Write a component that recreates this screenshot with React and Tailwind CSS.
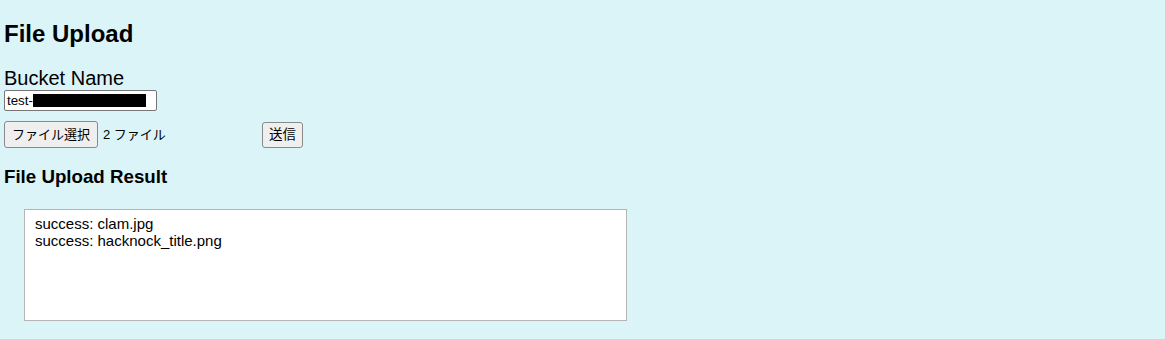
export default function App() {
	const results = ['success: clam.jpg', 'success: hacknock_title.png'];

	return (
		<div className="min-h-screen bg-[#daf4f8] px-1 font-['Liberation_Sans','Noto_Sans_CJK_JP',Arial,sans-serif] text-black">
			<h2 className="pt-[20px] text-[24px] font-bold leading-[28px]">File Upload</h2>

			<form className="flex flex-col items-start">
				<label className="mt-[19px] text-[20px] leading-[23px]">Bucket Name</label>
				<div className="flex h-[21px] w-[153px] items-center rounded-[2px] border border-[#767676] bg-white px-[2px] text-[13.33px] leading-none">
					<span>test-</span>
					<span className="h-[13px] w-[113px] bg-black" />
				</div>

				<div className="mt-[10px] flex h-[27px] items-center">
					<div className="flex w-[254px] items-center">
						<button
							type="button"
							className="h-[27px] w-[94px] rounded-[3px] border border-[#8a8a8a] bg-[#efefef] text-[13px] leading-none"
						>
							ファイル選択
						</button>
						<span className="ml-[5px] text-[13px] leading-none">2 ファイル</span>
					</div>
					<button
						type="button"
						className="ml-[4px] h-[26px] w-[41px] rounded-[3px] border border-[#8a8a8a] bg-[#efefef] text-[13.5px] leading-none"
					>
						送信
					</button>
				</div>
			</form>

			<h3 className="mt-[18px] text-[18.72px] font-bold leading-[21.5px]">File Upload Result</h3>

			<div className="ml-[20px] mt-[21.5px] h-[112px] w-[603px] border border-[#b5b5b5] bg-white pl-[10px] pt-[5px] text-[15px] leading-[17.25px]">
				{results.map((r) => (
					<div key={r}>{r}</div>
				))}
			</div>
		</div>
	);
}
